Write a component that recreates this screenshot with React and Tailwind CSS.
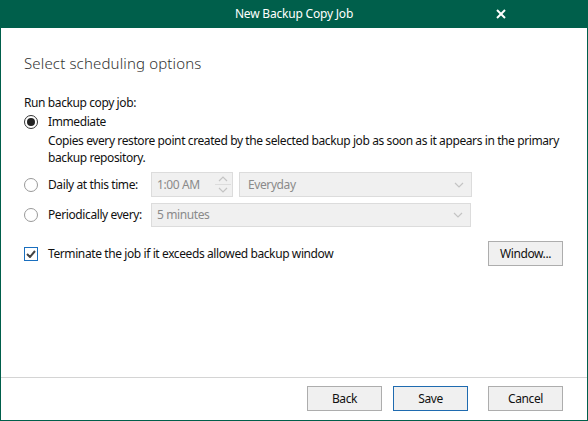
import React from 'react';

const font = { fontFamily: '"Noto Sans", "Open Sans", sans-serif' };

function Radio({ checked }) {
  return (
    <span className={`w-[14px] h-[14px] rounded-full border flex items-center justify-center bg-white shrink-0 ${checked ? 'border-[#333]' : 'border-[#999]'}`}>
      {checked && <span className="w-[8px] h-[8px] rounded-full bg-[#222]" />}
    </span>
  );
}

function Chevron() {
  return (
    <svg width="10" height="6" viewBox="0 0 10 6" fill="none" stroke="#c4c4c4" strokeWidth="1.2"><polyline points="1,1 5,5 9,1" /></svg>
  );
}

function Button({ children, primary }) {
  return (
    <button className={`w-[75px] h-[25px] bg-[#f0f0f0] text-[12px] text-[#111] border ${primary ? 'border-[#1f6bb0]' : 'border-[#adadad]'}`}>
      {children}
    </button>
  );
}

export default function App() {
  return (
    <div className="w-[588px] h-[421px] flex flex-col bg-white border border-t-0 border-[#005f4b] text-[12px] text-[#111] tracking-[-0.4px]" style={font}>
      {/* title bar */}
      <div className="h-[28px] bg-[#005f4b] -mx-px flex items-center justify-center relative text-white text-[12px] tracking-[-0.2px]">
        New Backup Copy Job
        <svg className="absolute left-[496px] top-[9px]" width="10" height="10" viewBox="0 0 10 10" stroke="white" strokeWidth="2"><line x1="1" y1="1" x2="9" y2="9" /><line x1="9" y1="1" x2="1" y2="9" /></svg>
      </div>

      <div className="flex-1 pl-[23px] pr-[24px] whitespace-nowrap">
        <div className="text-[15px] font-light text-[#333] mt-[25px] leading-[20px] tracking-[0.15px]">Select scheduling options</div>

        <div className="mt-[22px] leading-[16px]">Run backup copy job:</div>

        <div className="flex items-center gap-[10px] mt-[2px] h-[18px]">
          <Radio checked />
          <span>Immediate</span>
        </div>
        <div className="pl-[24px] leading-[17px] mt-[1px]">
          Copies every restore point created by the selected backup job as soon as it appears in the primary<br />backup repository.
        </div>

        <div className="flex items-center mt-[6px] h-[25px]">
          <div className="w-[127px] flex items-center gap-[10px]">
            <Radio />
            <span>Daily at this time:</span>
          </div>
          <div className="w-[82px] h-[25px] bg-[#f0f0f0] border border-[#dcdcdc] flex items-center text-[#8a8a8a]">
            <span className="pl-[5px] flex-1">1:00 AM</span>
            <div className="w-[18px] h-full flex flex-col items-center justify-center">
              <svg width="10" height="6" viewBox="0 0 10 6" fill="none" stroke="#c4c4c4" strokeWidth="1.2"><polyline points="1,5 5,1 9,5" /></svg>
              <div className="w-[16px] h-px bg-[#dcdcdc] my-[2px]" />
              <Chevron />
            </div>
          </div>
          <div className="ml-[6px] w-[233px] h-[25px] bg-[#f0f0f0] border border-[#dcdcdc] flex items-center justify-between pl-[8px] pr-[7px] text-[#8a8a8a]">
            <span>Everyday</span>
            <Chevron />
          </div>
        </div>

        <div className="flex items-center mt-[6px] h-[24px]">
          <div className="w-[127px] flex items-center gap-[10px]">
            <Radio />
            <span>Periodically every:</span>
          </div>
          <div className="w-[320px] h-[24px] bg-[#f0f0f0] border border-[#dcdcdc] flex items-center justify-between pl-[5px] pr-[7px] text-[#8a8a8a]">
            <span>5 minutes</span>
            <Chevron />
          </div>
        </div>

        <div className="flex items-center justify-between mt-[14px] h-[25px]">
          <div className="flex items-center gap-[10px]">
            <span className="w-[14px] h-[14px] border border-[#1a6fbf] bg-white flex items-center justify-center">
              <svg width="10" height="8" viewBox="0 0 10 8" fill="none" stroke="#444" strokeWidth="2"><polyline points="1,4 4,7 9,1" /></svg>
            </span>
            <span>Terminate the job if it exceeds allowed backup window</span>
          </div>
          <Button>Window...</Button>
        </div>
      </div>

      <div className="h-px bg-[#d4d4d4]" />
      <div className="h-[42px] flex items-start justify-end pt-[8px] pr-[24px]">
        <Button>Back</Button>
        <div className="w-[11px]" />
        <Button primary>Save</Button>
        <div className="w-[20px]" />
        <Button>Cancel</Button>
      </div>
    </div>
  );
}
